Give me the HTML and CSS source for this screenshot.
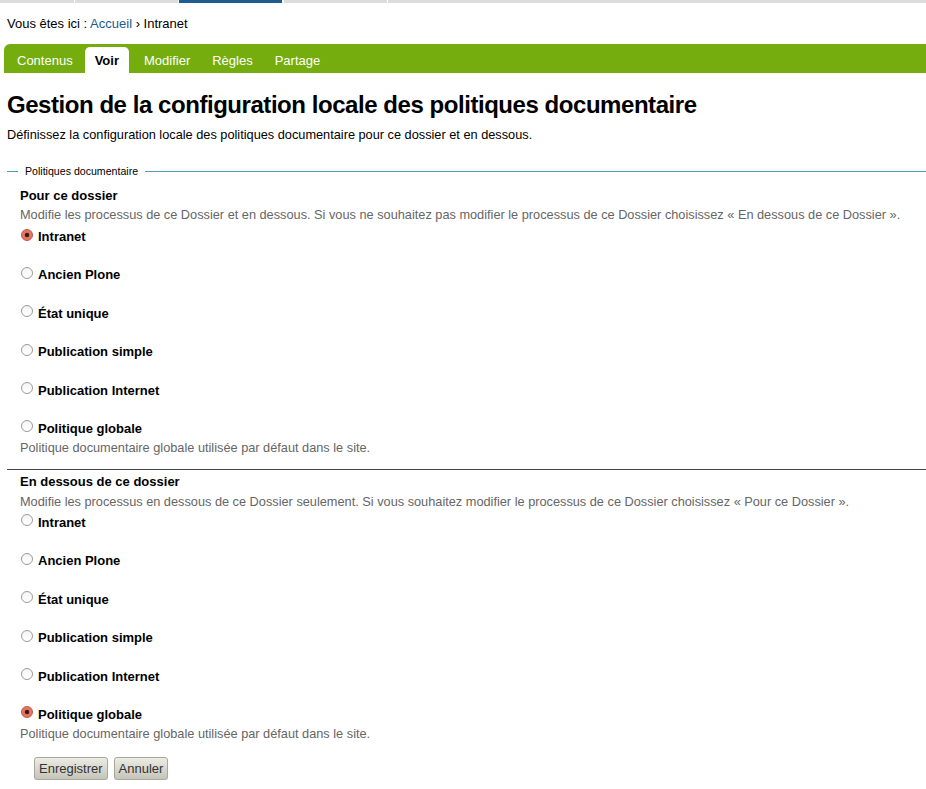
FILE: index.html
```html
<!DOCTYPE html>
<html lang="fr">
<head>
<meta charset="utf-8">
<title>Politiques documentaire</title>
<link rel="stylesheet" href="styles.css">
</head>
<body>
<div class="topstrip">
  <span class="seg s1"></span>
  <span class="seg s2"></span>
  <span class="seg s3 active"></span>
  <span class="seg s4"></span>
  <span class="seg s5"></span>
</div>
<div class="breadcrumb">Vous êtes ici : <a href="#">Accueil</a> › Intranet</div>
<nav class="tabbar">
  <a class="tab" href="#">Contenus</a>
  <a class="tab selected" href="#">Voir</a>
  <a class="tab" href="#">Modifier</a>
  <a class="tab" href="#">Règles</a>
  <a class="tab" href="#">Partage</a>
</nav>
<main class="content">
  <h1 class="title">Gestion de la configuration locale des politiques documentaire</h1>
  <p class="lead">Définissez la configuration locale des politiques documentaire pour ce dossier et en dessous.</p>
  <form class="policy-form">
    <div class="legend-row"><span class="legend-text">Politiques documentaire</span></div>
    <div class="field">
      <div class="field-label">Pour ce dossier</div>
      <div class="field-help">Modifie les processus de ce Dossier et en dessous. Si vous ne souhaitez pas modifier le processus de ce Dossier choisissez « En dessous de ce Dossier ».</div>
      <label class="option"><input type="radio" name="here" checked><span>Intranet</span></label>
      <label class="option"><input type="radio" name="here"><span>Ancien Plone</span></label>
      <label class="option"><input type="radio" name="here"><span>État unique</span></label>
      <label class="option"><input type="radio" name="here"><span>Publication simple</span></label>
      <label class="option"><input type="radio" name="here"><span>Publication Internet</span></label>
      <label class="option last"><input type="radio" name="here"><span>Politique globale</span></label>
      <div class="option-help">Politique documentaire globale utilisée par défaut dans le site.</div>
    </div>
    <div class="field second">
      <div class="field-label">En dessous de ce dossier</div>
      <div class="field-help">Modifie les processus en dessous de ce Dossier seulement. Si vous souhaitez modifier le processus de ce Dossier choisissez « Pour ce Dossier ».</div>
      <label class="option"><input type="radio" name="below"><span>Intranet</span></label>
      <label class="option"><input type="radio" name="below"><span>Ancien Plone</span></label>
      <label class="option"><input type="radio" name="below"><span>État unique</span></label>
      <label class="option"><input type="radio" name="below"><span>Publication simple</span></label>
      <label class="option"><input type="radio" name="below"><span>Publication Internet</span></label>
      <label class="option last"><input type="radio" name="below" checked><span>Politique globale</span></label>
      <div class="option-help">Politique documentaire globale utilisée par défaut dans le site.</div>
    </div>
    <div class="buttons">
      <button type="button" class="btn">Enregistrer</button>
      <button type="button" class="btn">Annuler</button>
    </div>
  </form>
</main>
</body>
</html>
```
FILE: styles.css
```css
* { box-sizing: border-box; }
html, body { margin: 0; padding: 0; background: #fff; }
body {
  font-family: "Liberation Sans", Arial, sans-serif;
  font-size: 13px;
  color: #000;
  width: 926px;
  overflow: hidden;
}
.topstrip {
  display: flex;
  height: 3px;
  gap: 1px;
}
.seg { background: #dcdcdc; height: 3px; }
.s1 { width: 74px; }
.s2 { width: 103px; }
.s3 { width: 103px; }
.s4 { width: 103px; margin-left: 1px; }
.s5 { flex: 1; }
.seg.active { background: #205c90; }

.breadcrumb {
  padding: 12px 0 0 7px;
  line-height: 18px;
  height: 41px;
}
.breadcrumb a { color: #205c90; text-decoration: none; }

.tabbar {
  margin-left: 4px;
  height: 29px;
  background: #75ad0e;
  border-radius: 6px 0 0 0;
  display: flex;
  align-items: flex-end;
  padding-left: 3px;
  gap: 2px;
}
.tab {
  display: block;
  height: 26px;
  line-height: 27px;
  padding: 0 10px;
  color: #fff;
  text-decoration: none;
  border-radius: 5px 5px 0 0;
}
.tab.selected {
  background: #fff;
  color: #000;
  font-weight: bold;
  margin-right: 3px;
}

.content { padding: 0 0 0 7px; }
.title {
  margin: 17px 0 0 0;
  font-size: 24px;
  line-height: 30px;
  font-weight: bold;
  letter-spacing: -0.45px;
}
.lead {
  margin: 6px 0 0 0;
  line-height: 18px;
  font-size: 12.75px;
}
.policy-form { margin-top: 19px; }
.legend-row {
  display: flex;
  align-items: center;
  font-size: 10.6px;
  height: 16px;
}
.legend-row::before {
  content: "";
  width: 11px;
  border-top: 1px solid #4e9fb6;
}
.legend-row::after {
  content: "";
  flex: 1;
  border-top: 1px solid #4e9fb6;
}
.legend-text { padding: 0 7px; }

.field { padding-left: 13px; }
.field-label {
  margin-top: 7px;
  font-weight: bold;
  line-height: 19px;
}
.field-help {
  color: #666;
  font-size: 12.75px;
  line-height: 19px;
  margin-bottom: 3px;
}
.option {
  display: flex;
  align-items: center;
  line-height: 19px;
  height: 19px;
  margin-bottom: 19.4px;
  font-weight: bold;
}
.option.last { margin-bottom: 0; }
.option input {
  appearance: none;
  -webkit-appearance: none;
  width: 12px;
  height: 12px;
  margin: -4px 5px 0 1px;
  border-radius: 50%;
  border: 1px solid #9a9a9a;
  background: linear-gradient(#f4f4f4, #fff);
  flex: none;
}
.option input:checked {
  border-color: #b8554a;
  background: radial-gradient(circle at 50% 50%, #3a1a16 0, #3a1a16 1.8px, #e4705c 2.6px, #e8806c 100%);
}
.option-help {
  color: #666;
  font-size: 12.75px;
  line-height: 19px;
}
.field.second {
  border-top: 1px solid #444;
  margin-top: 12px;
  padding-top: 0;
}
.field.second .field-label { margin-top: 2px; line-height: 20px; }
.field.second .field-help { line-height: 20px; margin-bottom: 1px; }
.buttons {
  padding: 14px 0 0 27px;
  display: flex;
  gap: 6px;
}
.btn {
  font-family: "Liberation Sans", Arial, sans-serif;
  font-size: 13px;
  color: #333;
  height: 23px;
  padding: 0 4px;
  border: 1px solid #a8a89c;
  border-radius: 3px;
  background: linear-gradient(#ecece6, #c4c4b8);
  box-shadow: 0 1px 1px rgba(0,0,0,0.15);
}
```
